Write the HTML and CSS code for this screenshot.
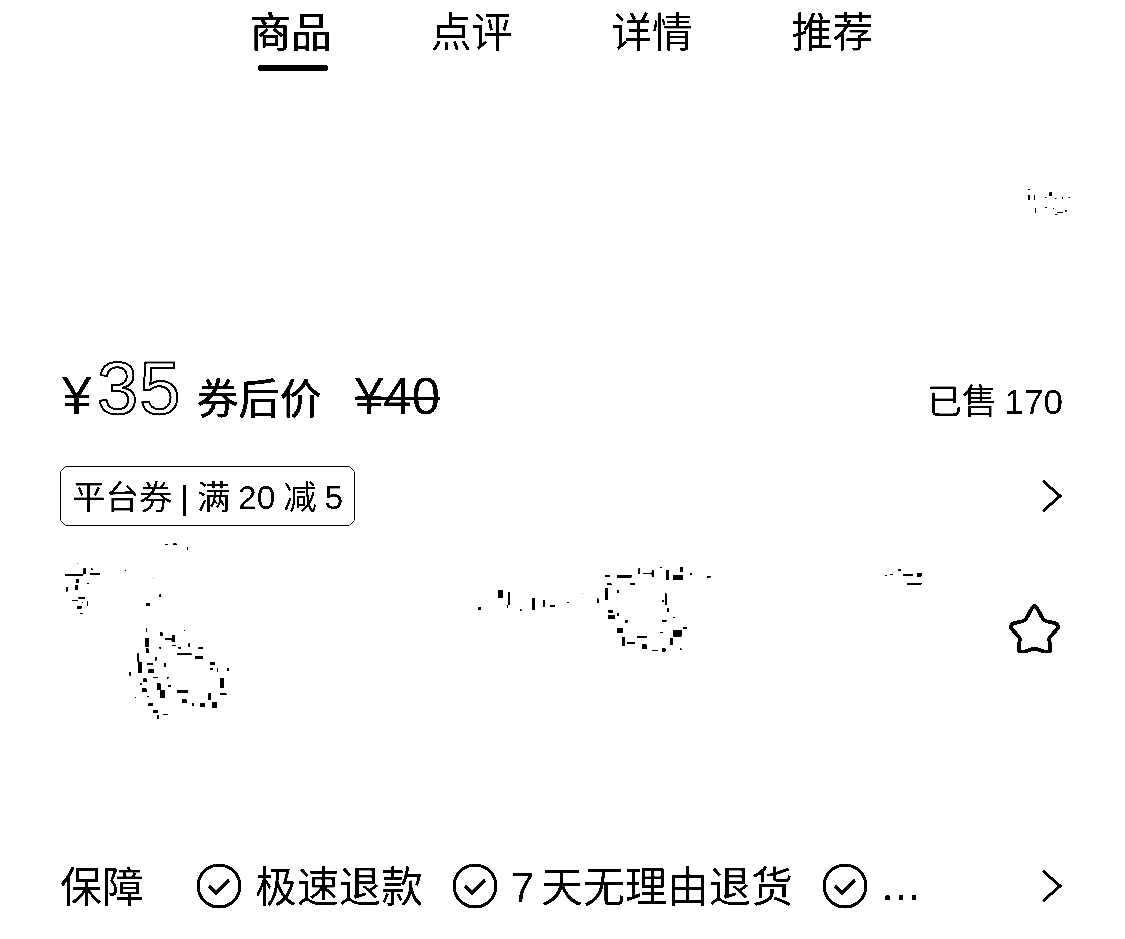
FILE: index.html
```html
<!DOCTYPE HTML>
<html>
<head>
<meta charset="utf-8">
<link rel="stylesheet" href="styles.css">
</head>
<body>
<div class="page">
    <nav class="tabs">
        <a class="tab active">商品</a>
        <a class="tab">点评</a>
        <a class="tab">详情</a>
        <a class="tab">推荐</a>
    </nav>

    <div class="gallery">
        <svg class="specks" width="50" height="36" viewBox="0 0 50 36">
            <g transform="translate(-13 -10) scale(.3333)">
                <path d="M55 42h5v3h-5zM55 60h6v15h-6zM72 60h3v15h-3zM105 65h5v3h-5zM118 52h8v12h-8zM135 70h5v3h-5zM155 65h5v8h-5zM175 65h5v3h-5zM75 100h3v15h-3zM105 95h5v5h-5zM128 100h5v3h-5zM140 110h20v5h-20zM135 118h8v3h-8zM165 105h5v5h-5z"/>
            </g>
        </svg>
    </div>

    <div class="price-row">
        <div class="price">
            <span class="yen">¥</span><span class="num">35</span>
            <span class="after">券后价</span>
            <span class="old">¥40</span>
        </div>
        <span class="sold">已售 170</span>
    </div>

    <div class="coupon-row">
        <span class="coupon">平台券 | 满 20 减 5</span>
        <svg class="arrow" width="22" height="34" viewBox="0 0 22 34"><path d="M2 2l17 15-17 15"/></svg>
    </div>

    <div class="title-row">
        <svg class="specks" width="940" height="190" viewBox="0 0 940 190">
            <g transform="translate(-20 -9) scale(.3333)">
                <path d="M75 132h55v6h-55zM130 115h8v18h-8zM150 130h30v5h-30zM152 115h6v6h-6zM108 148h10v12h-10zM105 165h8v15h-8zM78 170h5v15h-5zM140 158h8v5h-8zM95 210h20v3h-20zM115 200h20v6h-20zM125 215h5v5h-5zM110 228h15v8h-15zM140 212h5v15h-5zM120 248h10v3h-10zM112 100h3v3h-3zM375 42h8v3h-8zM400 40h10v6h-10zM440 52h5v8h-5zM255 120h3v3h-3zM338 143h3v3h-3zM358 193h5v8h-5zM318 220h12v8h-12z"/>
                <path d="M317 295h4v10h-4zM360 307h8v12h-8zM375 325h25v6h-25zM395 315h10v20h-10zM432 300h3v3h-3zM315 325h12v25h-12zM318 355h8v15h-8zM358 350h6v6h-6zM395 345h12v4h-12zM415 350h8v6h-8zM445 340h6v10h-6zM475 352h15v5h-15zM410 370h45v5h-45zM465 378h25v8h-25zM292 370h6v25h-6zM295 395h10v35h-10zM320 400h20v6h-20zM325 418h18v12h-18zM345 380h5v12h-5zM372 400h6v12h-6zM510 395h15v10h-15zM510 415h10v6h-10zM530 415h5v10h-5zM560 415h8v8h-8zM268 425h6v12h-6zM340 440h15v4h-15zM380 440h6v6h-6zM310 445h10v12h-10zM300 460h6v6h-6zM305 475h15v12h-15zM350 460h12v20h-12zM360 480h15v25h-15zM540 445h12v30h-12zM410 480h35v10h-35zM385 465h8v6h-8zM320 498h8v4h-8zM285 500h4v4h-4zM505 490h8v20h-8zM540 490h20v6h-20zM325 520h15v8h-15zM425 508h15v12h-15zM455 520h8v8h-8zM480 520h15v10h-15zM515 515h15v20h-15zM340 540h15v10h-15zM350 555h8v12h-8zM370 552h15v4h-15z"/>
            </g>
            <g transform="translate(410 11) scale(.3333)">
                <path d="M25 170h8v10h-8zM85 120h15v25h-15zM115 125h5v40h-5zM110 165h5v10h-5zM150 178h5v5h-5zM185 145h10v35h-10zM220 150h5v22h-5zM240 165h15v5h-15zM290 155h8v5h-8zM335 130h3v3h-3zM380 145h6v15h-6z"/>
                <path d="M405 75h15v5h-15zM440 75h45v8h-45zM505 55h5v18h-5zM520 68h25v5h-25zM545 60h8v20h-8zM570 50h5v5h-5zM588 60h8v30h-8zM610 75h30v15h-30zM630 50h10v15h-10zM660 70h6v6h-6zM710 78h12v5h-12zM410 100h15v5h-15zM405 115h10v35h-10zM440 120h8v10h-8zM480 100h15v5h-15zM585 130h5v35h-5zM575 150h8v5h-8zM590 175h8v10h-8zM415 180h15v8h-15zM415 195h20v12h-20zM440 190h8v8h-8zM465 210h8v8h-8zM575 210h15v5h-15zM610 200h5v5h-5zM440 235h20v15h-20zM455 260h10v28h-10zM470 275h25v8h-25zM500 258h30v6h-30zM515 283h15v15h-15zM570 245h8v5h-8zM610 240h25v20h-25zM640 230h10v8h-10zM575 295h12v10h-12zM600 265h10v20h-10zM630 295h5v5h-5zM545 300h20v3h-20z"/>
                <path d="M1245 75h5v3h-5zM1260 72h8v3h-8zM1285 58h10v4h-10zM1300 73h30v6h-30zM1340 68h15v12h-15zM1310 98h45v6h-45z"/>
            </g>
        </svg>
        <svg class="star" width="52" height="50" viewBox="0 0 54 52">
            <path d="M27 3c2 0 3 2 4 4l5 9c1 2 2 2 4 3l9 2c3 1 4 4 2 6l-7 8c-1 1-2 2-1 4l1 9c0 3-2 4-5 3l-9-3c-2-1-3-1-5 0l-9 3c-3 1-5 0-5-3l1-9c1-2 0-3-1-4l-7-8c-2-2-1-5 2-6l9-2c2-1 3-1 4-3l5-9c1-2 2-4 4-4z"/>
        </svg>
    </div>

    <div class="guarantee-row">
        <span class="g-label">保障</span>
        <div class="g-items">
            <svg class="check" width="46" height="46" viewBox="0 0 46 46"><circle cx="23" cy="23" r="21"/><path d="M13 23l7 7 13-13"/></svg>
            <span class="g-text">极速退款</span>
            <svg class="check" width="46" height="46" viewBox="0 0 46 46"><circle cx="23" cy="23" r="21"/><path d="M13 23l7 7 13-13"/></svg>
            <span class="g-text">7 天无理由退货</span>
            <svg class="check" width="46" height="46" viewBox="0 0 46 46"><circle cx="23" cy="23" r="21"/><path d="M13 23l7 7 13-13"/></svg>
            <span class="g-dots">...</span>
        </div>
        <svg class="arrow" width="22" height="34" viewBox="0 0 22 34"><path d="M2 2l17 15-17 15"/></svg>
    </div>
</div>
</body>
</html>
```

FILE: styles.css
```css
* {
    box-sizing: border-box;
}
body {
    margin: 0;
    background: #fff;
}
.page {
    height: 939px;
    overflow: hidden;
    background: #fff;
    color: #000;
    font-family: "Liberation Sans", "Noto Sans CJK SC", sans-serif;
    filter: grayscale(1) contrast(12);
}
svg {
    display: block;
    flex: none;
}
.tabs {
    display: flex;
    height: 72px;
    padding-left: 250px;
    gap: 98px;
}
.tab {
    position: relative;
    width: 82.5px;
    font-size: 41px;
    line-height: 66px;
    font-weight: 400;
    white-space: nowrap;
}
.tab.active {
    -webkit-text-stroke: .5px #000;
}
.tab.active::after {
    content: "";
    position: absolute;
    left: 8px;
    bottom: 1px;
    width: 70px;
    height: 6px;
    border-radius: 3px;
    background: #000;
}
.gallery {
    height: 280px;
    display: flex;
    justify-content: flex-end;
    padding: 113px 52px 0 0;
}
.price-row {
    display: flex;
    justify-content: space-between;
    align-items: baseline;
    height: 114px;
    padding: 0 62px;
}
.price {
    display: flex;
    align-items: baseline;
    line-height: 74px;
}
.yen {
    font-size: 53px;
    width: 35px;
}
.num {
    font-size: 74px;
    letter-spacing: 1px;
    color: #fff;
    -webkit-text-stroke: 2px #000;
    width: 100px;
}
.after {
    font-size: 41.5px;
    -webkit-text-stroke: .6px #000;
    width: 158px;
}
.old {
    font-size: 51px;
    text-decoration: line-through;
    text-decoration-thickness: 3px;
}
.sold {
    font-size: 35px;
    word-spacing: -2px;
}
.coupon-row {
    display: flex;
    justify-content: space-between;
    align-items: center;
    height: 60px;
    padding: 0 62px 0 60px;
}
.coupon {
    display: block;
    width: 295px;
    height: 60px;
    border: 1px solid #000;
    border-radius: 8px;
    padding-left: 11px;
    font-size: 33.5px;
    line-height: 62px;
    word-spacing: -1.5px;
    white-space: nowrap;
}
.arrow {
    fill: none;
    stroke: #000;
    stroke-width: 3;
}
.title-row {
    display: flex;
    justify-content: space-between;
    height: 330px;
    padding: 13px 65px 0 60px;
}
.star {
    margin-top: 64px;
    fill: none;
    stroke: #000;
    stroke-width: 4;
}
.guarantee-row {
    display: flex;
    align-items: center;
    height: 60px;
    padding: 0 62px 0 60px;
}
.g-label {
    width: 136px;
    padding-bottom: 6px;
    font-size: 42px;
}
.g-items {
    flex: 1;
    display: flex;
    align-items: center;
}
.check {
    fill: none;
    stroke: #000;
    stroke-width: 3;
}
.check path {
    stroke-width: 4;
}
.g-text {
    margin: 0 29px 0 13px;
    padding-bottom: 6px;
    font-size: 42px;
    word-spacing: -5px;
    white-space: nowrap;
}
.g-dots {
    margin-left: 14px;
    font-size: 40px;
    letter-spacing: 2px;
    -webkit-text-stroke: .5px #000;
}
```
